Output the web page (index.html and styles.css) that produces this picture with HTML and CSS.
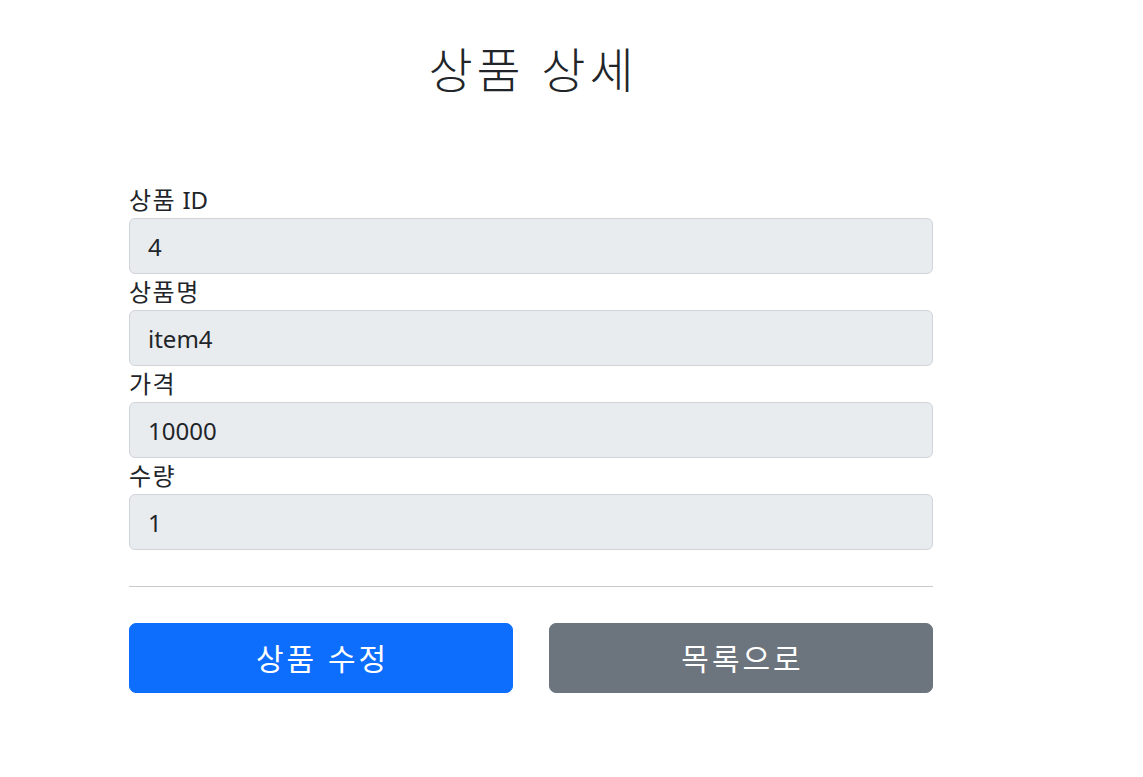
FILE: index.html
```html
<!DOCTYPE html>
<html lang="ko">
<head>
<meta charset="utf-8">
<title>상품 상세</title>
<link rel="stylesheet" href="styles.css">
</head>
<body>
<div class="container">
  <div class="header">
    <h2 class="title">상품 상세</h2>
  </div>
  <div class="form">
    <div class="field">
      <label class="label" for="itemId"><span class="ko">상품</span> ID</label>
      <input class="control" id="itemId" type="text" value="4" readonly>
    </div>
    <div class="field">
      <label class="label" for="itemName"><span class="ko">상품명</span></label>
      <input class="control" id="itemName" type="text" value="item4" readonly>
    </div>
    <div class="field">
      <label class="label" for="price"><span class="ko">가격</span></label>
      <input class="control" id="price" type="text" value="10000" readonly>
    </div>
    <div class="field">
      <label class="label" for="quantity"><span class="ko">수량</span></label>
      <input class="control" id="quantity" type="text" value="1" readonly>
    </div>
  </div>
  <hr class="divider">
  <div class="actions">
    <button class="btn btn-primary" type="button">상품 수정</button>
    <button class="btn btn-secondary" type="button">목록으로</button>
  </div>
</div>
</body>
</html>
```

FILE: styles.css
```css
* {
  box-sizing: border-box;
}

html, body {
  margin: 0;
  padding: 0;
  background: #ffffff;
}

body {
  font-family: "Noto Sans", "Noto Sans CJK KR", sans-serif;
  font-size: 24px;
  line-height: 36px;
  color: #212529;
}

.container {
  width: 840px;
  margin-left: 111px;
  padding: 0 18px;
}

.header {
  padding: 41px 0 72px;
  text-align: center;
}

.title {
  margin: 0 0 12px;
  font-size: 48px;
  line-height: 57px;
  font-weight: 300;
  letter-spacing: 4px;
  text-indent: 4px;
  color: #212529;
}

.field {
  display: flex;
  flex-direction: column;
}

.label {
  display: block;
  height: 36px;
  line-height: 36px;
}

.ko {
  letter-spacing: 1.5px;
}

.control {
  display: block;
  width: 100%;
  height: 56px;
  padding: 9px 18px;
  font-family: inherit;
  font-size: 24px;
  line-height: 36px;
  color: #212529;
  background: #e9ecef;
  border: 1px solid #ced4da;
  border-radius: 6px;
  outline: none;
}

.divider {
  margin: 36px 0;
  border: 0;
  border-top: 1px solid #c8c9ca;
  height: 0;
}

.actions {
  display: flex;
  gap: 36px;
}

.btn {
  flex: 1 1 0;
  height: 70px;
  padding: 0 24px;
  font-family: inherit;
  font-size: 30px;
  line-height: 45px;
  letter-spacing: 3px;
  text-indent: 3px;
  color: #ffffff;
  border: 1px solid transparent;
  border-radius: 7px;
  cursor: pointer;
}

.btn-primary {
  background: #0d6efd;
  border-color: #0d6efd;
}

.btn-secondary {
  background: #6c757d;
  border-color: #6c757d;
}
```
